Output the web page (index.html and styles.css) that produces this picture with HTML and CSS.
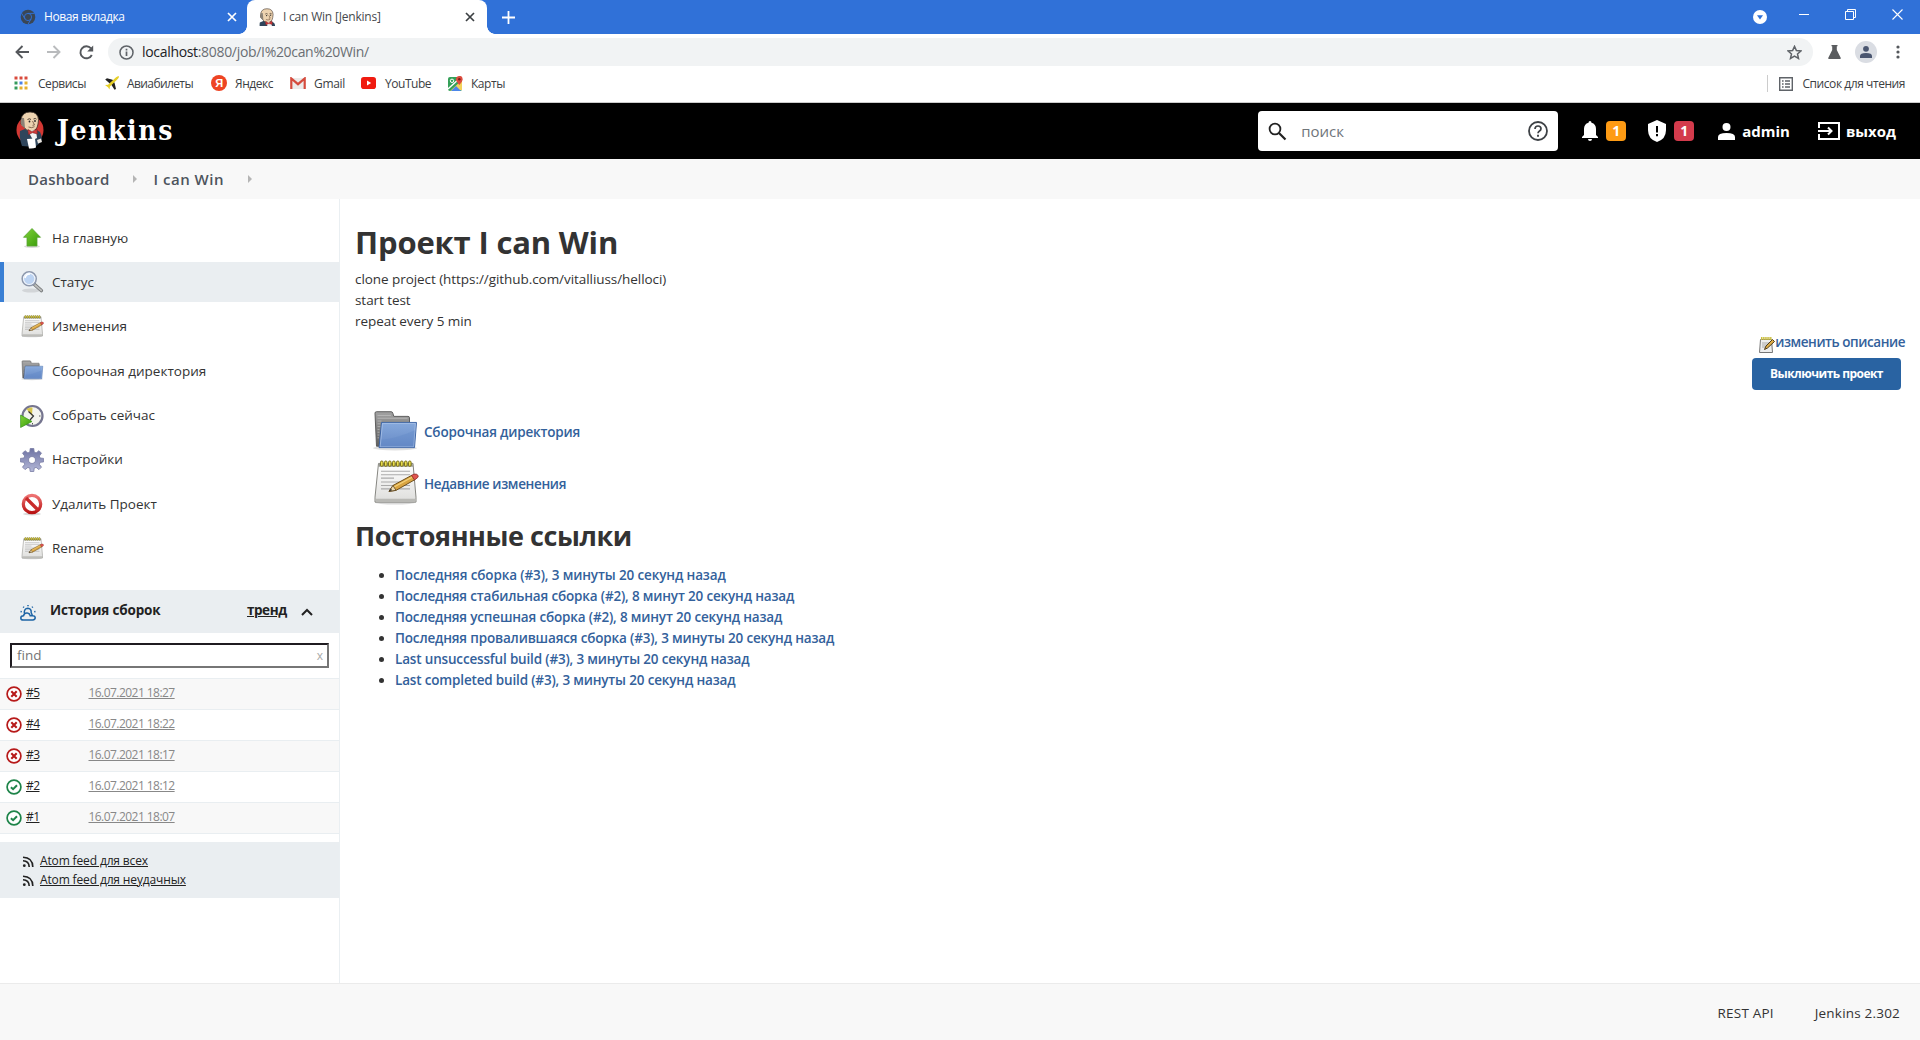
FILE: index.html
```
<!DOCTYPE html>
<html lang="ru">
<head>
<meta charset="utf-8">
<title>I can Win [Jenkins]</title>
<link rel="stylesheet" href="styles.css">
</head>
<body>
<svg class="defs" width="0" height="0" aria-hidden="true">
  <defs>
    <linearGradient id="g-green" x1="0" y1="0" x2="1" y2="1"><stop offset="0" stop-color="#82d33a"/><stop offset="1" stop-color="#369a08"/></linearGradient>
    <linearGradient id="g-blue" x1="0" y1="0" x2="0" y2="1"><stop offset="0" stop-color="#86a9dc"/><stop offset="1" stop-color="#6689c5"/></linearGradient>
    <linearGradient id="g-gray" x1="0" y1="0" x2="0" y2="1"><stop offset="0" stop-color="#a2a2a2"/><stop offset="1" stop-color="#5f5f5f"/></linearGradient>
    <linearGradient id="g-paper" x1="0" y1="0" x2="0" y2="1"><stop offset="0" stop-color="#ffffff"/><stop offset="1" stop-color="#dededc"/></linearGradient>
    <linearGradient id="g-gear" x1="0" y1="0" x2="0" y2="1"><stop offset="0" stop-color="#6d72a3"/><stop offset="1" stop-color="#b4b8d8"/></linearGradient>
    <linearGradient id="g-red" x1="0" y1="0" x2="0" y2="1"><stop offset="0" stop-color="#ee7373"/><stop offset="1" stop-color="#b91313"/></linearGradient>
  </defs>
  <symbol id="folder" viewBox="0 0 48 51.500" preserveAspectRatio="none">
    <ellipse cx="24" cy="43" rx="22" ry="2.500" fill="#000" opacity=".12"/>
    <path d="M4 5.500q0-1.500 1.500-1.500H20q1.500 0 1.800 1.500l1 3.500H37q1.500 0 1.500 1.500V41H5.500Z" fill="url(#g-gray)" stroke="#5a5a5a"/>
    <path d="M6.500 8H20M6.500 11h30M6.500 14h4M6.500 17h3M6.500 20h3M6.500 23h2M6.500 26h2M6.500 29h2M6.500 32h1.500" stroke="#c4c4c4" stroke-width=".7"/>
    <path d="M10.500 15.500H45.500L43.500 42.500H8Z" fill="url(#g-blue)" stroke="#3c64a4" stroke-linejoin="round"/>
    <path d="M11.500 16.500H44.400L42.600 41.500H9.200Z" fill="none" stroke="#b5cbec" stroke-width=".8" opacity=".8"/>
    <path d="M10.500 34Q25 33 44 24l-1.500 17.500H9.500Z" fill="#5f86c6" opacity=".35"/>
  </symbol>
  <symbol id="notepad" viewBox="0 2 48 49" preserveAspectRatio="none">
    <ellipse cx="24" cy="45.500" rx="20" ry="2" fill="#000" opacity=".15"/>
    <path d="M7.500 5.500H42L45 40v5H4v-5Z" fill="url(#g-paper)" stroke="#85857f" stroke-linejoin="round"/>
    <path d="M5 41.500h39.500v3H5Z" fill="#b9b9b5"/>
    <path d="M8 5.500H41.500L42 9H7.500Z" fill="#96968e"/>
    <g fill="#e9dc4d" stroke="#79701a" stroke-width="1"><rect x="9.500" y="3" width="2.600" height="5.500" rx="1.300"/><rect x="13.500" y="3" width="2.600" height="5.500" rx="1.300"/><rect x="17.500" y="3" width="2.600" height="5.500" rx="1.300"/><rect x="21.500" y="3" width="2.600" height="5.500" rx="1.300"/><rect x="25.500" y="3" width="2.600" height="5.500" rx="1.300"/><rect x="29.500" y="3" width="2.600" height="5.500" rx="1.300"/><rect x="33.500" y="3" width="2.600" height="5.500" rx="1.300"/><rect x="37.500" y="3" width="2.600" height="5.500" rx="1.300"/></g>
    <path d="M10 13.500H39M10 17H39M10 20.500H23M10 24.500H39M10 28H39M10 31.500H39" stroke="#aaa" stroke-width="1.100"/>
    <path d="M18 34l4-6L41 17.500l3 4.500-19 11Z" fill="#d9a441" stroke="#6b4c17" stroke-linejoin="round"/>
    <path d="M23 29.500L41 19.500" stroke="#f4d27c" stroke-width="1.200"/>
    <path d="M18 34l4-6 3 5Z" fill="#ecd9b0" stroke="#5b4420" stroke-width=".8"/>
    <path d="M18 34l2-2.700 1 1.700Z" fill="#222"/>
    <path d="M40.500 17.700l2.500-1.300q3.500-.8 4.300 2 .3 1.500-3.800 4Z" fill="#e0554f" stroke="#8e2b27" stroke-width=".8"/>
  </symbol>
  <symbol id="butler" viewBox="0 0 28 38">
    <path d="M6 35Q3 27 4 20l5-2h10l5 3q3 6 1 10l-6 5Z" fill="#2f455b"/>
    <path d="M5 9Q6 1 14 1q8 0 8.500 8l-.5 4q-1 7-7 7.500-5-.5-8-5.500-3-1-2-6Z" fill="#edd3b0" stroke="#3b3028" stroke-width=".8"/>
    <path d="M6 7q-2 5 0 8l3 2-.5-6-.5-4Z" fill="#8b8377"/>
    <path d="M11.500 8.500q2-1.500 3.500 0M17.500 8q2-1.200 3 .2" fill="none" stroke="#4b3c30"/>
    <circle cx="13.500" cy="10.500" r=".9" fill="#252525"/><circle cx="19" cy="10" r=".9" fill="#252525"/>
    <path d="M16.500 10l2 4-2 .3M12.500 16q3 1.500 6-.3" fill="none" stroke="#6b4e3a" stroke-width=".8"/>
    <path d="M12 20l8-1 1 8-4 2Z" fill="#f3f3f3"/>
    <path d="M12 18.500l4 2.200 5-2.700.4 5-5-1.300-4 2Z" fill="#cf3a3a" stroke="#7a1c1c" stroke-width=".5"/>
    <path d="M11 28l8-.6 1 9q-3 1.500-7 1Z" fill="#fff"/>
    <path d="M21 29l4-1.500 1 3.500-4 1.500Z" fill="#e9e4de"/>
  </symbol>
  <symbol id="failed" viewBox="0 0 16 16"><circle cx="8" cy="8" r="6.900" fill="#fff" stroke="#b71a1a" stroke-width="1.700"/><path d="M5.300 5.300l5.400 5.400M10.700 5.300l-5.400 5.400" stroke="#b71a1a" stroke-width="2.100"/></symbol>
  <symbol id="passed" viewBox="0 0 16 16"><circle cx="8" cy="8" r="6.900" fill="#fff" stroke="#1e8449" stroke-width="1.700"/><path d="M4.900 8.200l2.200 2 3.900-3.900" fill="none" stroke="#1e8449" stroke-width="2"/></symbol>
  <symbol id="rss" viewBox="0 0 12 12"><circle cx="2.300" cy="9.700" r="1.400" fill="#222"/><path d="M1 4.800q6 .2 6.200 6.200M1 1.300q9.600.3 9.800 9.700" fill="none" stroke="#222" stroke-width="1.600"/></symbol>
</svg>

<div class="tabs">
  <div class="tab">
    <svg width="16" height="16" viewBox="0 0 16 16"><circle cx="8" cy="8" r="7.300" fill="#3a4654"/><circle cx="8" cy="8" r="3.600" fill="none" stroke="#3071d8" stroke-width=".9"/><path d="M8 4.400h6.500M4.900 9.800L1.600 4.200M11.100 9.800L8 15.300" stroke="#3071d8" stroke-width=".9"/></svg>
    <span class="tab-title new">Новая вкладка</span>
    <svg width="10" height="10" viewBox="0 0 10 10"><path d="M1 1l8 8M9 1L1 9" stroke="#fff" stroke-width="1.700"/></svg>
  </div>
  <div class="tab active">
    <svg width="16" height="18" viewBox="3 0 22 25"><use href="#butler" width="28" height="38"/></svg>
    <span class="tab-title">I can Win [Jenkins]</span>
    <svg width="10" height="10" viewBox="0 0 10 10"><path d="M1 1l8 8M9 1L1 9" stroke="#3c4043" stroke-width="1.700"/></svg>
  </div>
  <svg class="plus" width="13" height="13" viewBox="0 0 13 13"><path d="M6.500 0v13M0 6.500h13" stroke="#fff" stroke-width="1.800"/></svg>
  <div class="window-buttons">
    <svg width="14" height="14" viewBox="0 0 14 14"><circle cx="7" cy="7" r="7" fill="#fff"/><path d="M4 5.200h6L7 9.500Z" fill="#3071d8"/></svg>
    <svg class="wb first" width="10" height="10" viewBox="0 0 10 10"><path d="M0 5.500h10" stroke="#fff"/></svg>
    <svg class="wb" width="11" height="11" viewBox="0 0 11 11" fill="none" stroke="#fff"><path d="M.5 2.500h8v8h-8ZM2.500 2V.5h8v8H9"/></svg>
    <svg class="wb" width="11" height="11" viewBox="0 0 11 11"><path d="M.5.500l10 10M10.500.500l-10 10" stroke="#fff" stroke-width="1.100"/></svg>
  </div>
</div>

<div class="toolbar">
  <svg width="14" height="14" viewBox="0 0 14 14" fill="none" stroke="#55585c" stroke-width="1.900"><path d="M14 7H1.500M7.500 1L1.500 7l6 6"/></svg>
  <svg width="14" height="14" viewBox="0 0 14 14" fill="none" stroke="#b9bbbd" stroke-width="1.900"><path d="M0 7h12.500M6.500 1l6 6-6 6"/></svg>
  <svg width="15" height="15" viewBox="0 0 15 15"><path d="M12.800 10A6 6 0 1 1 12 3.400" fill="none" stroke="#55585c" stroke-width="1.900"/><path d="M14.200.500v6H8.200Z" fill="#55585c"/></svg>
  <div class="omnibox">
    <svg width="15" height="15" viewBox="0 0 15 15"><circle cx="7.500" cy="7.500" r="6.500" fill="none" stroke="#5f6368" stroke-width="1.500"/><path d="M7.500 6.500v4.500M7.500 3.800v1.600" stroke="#5f6368" stroke-width="1.700"/></svg>
    <span class="url"><b>localhost</b>:8080/job/I%20can%20Win/</span>
    <svg width="15" height="15" viewBox="0 0 15 15"><path d="M7.500 1.400l1.900 4.200 4.500.4-3.400 3 1 4.400-4-2.400-4 2.400 1-4.400-3.400-3 4.500-.4Z" fill="none" stroke="#5f6368" stroke-width="1.500"/></svg>
  </div>
  <svg class="flask" width="13" height="14" viewBox="0 0 13 14"><path d="M3.500 0h6v1.300H8.800V5l4 8q.2 1-.8 1H1q-1 0-.8-1l4-8V1.300h-.7Z" fill="#5a5c5f"/></svg>
  <svg class="avatar" width="22" height="22" viewBox="0 0 22 22"><circle cx="11" cy="11" r="11" fill="#dadde3"/><circle cx="11" cy="7.800" r="2.900" fill="#4a5670"/><path d="M5 17v-2q0-3 6-3t6 3v2Z" fill="#4a5670"/></svg>
  <svg class="dots" width="4" height="14" viewBox="0 0 4 14" fill="#55585c"><circle cx="2" cy="2" r="1.600"/><circle cx="2" cy="7" r="1.600"/><circle cx="2" cy="12" r="1.600"/></svg>
</div>

<div class="bookmarks">
  <a class="bm b1"><svg width="14" height="14" viewBox="0 0 14 14"><path d="M.5.500h3v3h-3ZM5.500.500h3v3h-3ZM10.500.500h3v3h-3Z" fill="#d94b3d"/><path d="M.5 5.500h3v3h-3Z" fill="#359a5c"/><path d="M5.500 5.500h3v3h-3Z" fill="#4a80e8"/><path d="M10.500 5.500h3v3h-3ZM5.500 10.500h3v3h-3ZM10.500 10.500h3v3h-3Z" fill="#e5b02f"/><path d="M.5 10.500h3v3h-3Z" fill="#359a5c"/></svg><span>Сервисы</span></a>
  <a class="bm b2"><svg width="14" height="14" viewBox="0 0 14 14"><path d="M.2 3.500L2 2.300l5.500 1.500 2 3L11 13l-1.500.8L6.500 9Z" fill="#222"/><path d="M0 9l3-.3L10.800 1.500Q12.500 0 14 .2q.2 1.300-1.500 3L5 10.500l-.5 3L3 11.200Z" fill="#e6cf28"/></svg><span>Авиабилеты</span></a>
  <a class="bm b3"><span class="ya">Я</span><span>Яндекс</span></a>
  <a class="bm b4"><svg width="16" height="12" viewBox="0 0 16 12"><path d="M1 1h14v11H1Z" fill="#ecebea"/><path d="M1.300 12V1.500L8 7.200l6.700-5.700V12" fill="none" stroke="#d54b3d" stroke-width="2.200"/></svg><span>Gmail</span></a>
  <a class="bm b5"><svg width="15" height="12" viewBox="0 0 15 12"><rect width="15" height="12" rx="2.800" fill="#f01b10"/><path d="M6 3.500v5L10.200 6Z" fill="#fff"/></svg><span>YouTube</span></a>
  <a class="bm b6"><svg width="15" height="15" viewBox="0 0 15 15"><rect y="1" width="14" height="14" rx="2" fill="#34a058"/><path d="M2 15L13 5l1 1v8Z" fill="#f3d25a"/><path d="M3 15l5-5 5 5Z" fill="#4b87ea"/><path d="M0 13L12 2" stroke="#fff" stroke-width="1.300"/><circle cx="4" cy="4.800" r="1.700" fill="none" stroke="#fff"/><path d="M11.300 9Q8 5.500 8 3.300q0-3 3.300-3.300t3.300 3.300Q14.600 5.500 11.300 9Z" fill="#dd4b3e"/><circle cx="11.300" cy="3.300" r="1.200" fill="#7d1c14"/></svg><span>Карты</span></a>
  <a class="bm reading"><svg width="14" height="14" viewBox="0 0 14 14"><path d="M.7.700h12.600v12.600H.7Z" fill="none" stroke="#5f6368" stroke-width="1.400"/><path d="M3 4h1.600M3 7h1.600M3 10h1.600M6 4h5M6 7h5M6 10h5" stroke="#5f6368" stroke-width="1.500"/></svg><span>Список для чтения</span></a>
</div>

<header class="header">
  <a class="logo">
    <svg width="28" height="42" viewBox="0 -1 28 42"><ellipse cx="14" cy="19" rx="13.500" ry="14" fill="#d33833"/><use href="#butler" width="28" height="38"/></svg>
    <span>Jenkins</span>
  </a>
  <div class="search">
    <svg width="19" height="19" viewBox="0 0 19 19"><circle cx="7" cy="7" r="5.400" fill="none" stroke="#222" stroke-width="1.800"/><path d="M11 11l6.500 6.500" stroke="#222" stroke-width="2.200"/></svg>
    <span>поиск</span>
    <svg width="20" height="20" viewBox="0 0 20 20"><circle cx="10" cy="10" r="9" fill="none" stroke="#3d4145" stroke-width="1.800"/><path d="M7 8q0-3 3-3t3 2.700q0 1.300-1.500 2.300T10 12.300" fill="none" stroke="#3d4145" stroke-width="1.700"/><path d="M10 13.700v2" stroke="#3d4145" stroke-width="1.900"/></svg>
  </div>
  <svg width="16" height="20" viewBox="0 0 16 20"><path d="M8 0q1.500 0 1.500 1.800Q14 3 14 8v6l2 2v1H0v-1l2-2V8q0-5 4.500-6.200Q6.500 0 8 0ZM6 18h4q0 2-2 2t-2-2Z" fill="#fff"/></svg>
  <span class="badge warn">1</span>
  <svg class="shield" width="18" height="22" viewBox="0 0 18 22"><path d="M9 0l9 4v6q0 9-9 12Q0 19 0 10V4Z" fill="#fff"/><path d="M9 6v6.500M9 14v2.200" stroke="#000" stroke-width="2"/></svg>
  <span class="badge danger">1</span>
  <svg class="user" width="17" height="17" viewBox="0 0 17 17"><circle cx="8.500" cy="4" r="4" fill="#fff"/><path d="M0 17v-3q0-4 8.500-4t8.500 4v3Z" fill="#fff"/></svg>
  <span class="name">admin</span>
  <svg class="exit" width="22" height="18" viewBox="0 0 22 18"><path d="M1 6V1h20v16H1v-5M0 9h13M10 5.500L13.500 9 10 12.500" fill="none" stroke="#fff" stroke-width="2"/></svg>
  <span class="logout">выход</span>
</header>

<nav class="crumbs"><a class="dash">Dashboard</a><i></i><a class="proj">I can Win</a><i></i></nav>

<div class="page">
  <aside class="side">
    <div class="tasks">
      <a class="task"><svg width="24" height="24" viewBox="0 0 24 24"><ellipse cx="12" cy="20.500" rx="8" ry="1.500" opacity=".15"/><path d="M12 2.500l8.500 8.800h-3.500V20h-10v-8.700h-3.500Z" fill="url(#g-green)" stroke="#58a332" stroke-width=".8" stroke-linejoin="round"/></svg><span>На главную</span></a>
      <a class="task current"><svg width="24" height="24" viewBox="0 0 24 24"><ellipse cx="11" cy="20.500" rx="9" ry="2" opacity=".1"/><path d="M14.500 14.500l6.800 6" stroke="#76787a" stroke-width="3.600" stroke-linecap="round"/><path d="M15 15l6.300 5.500" stroke="#bcbebd" stroke-width="1.700" stroke-linecap="round"/><circle cx="9.200" cy="8.800" r="7" fill="#bcd3f2" stroke="#8e98ac" stroke-width="1.600"/><circle cx="9.200" cy="8.800" r="5.700" fill="none" stroke="#f1f5fb" stroke-width="1.100"/><path d="M5 8q1-4 5-4" fill="none" stroke="#fff" stroke-width="1.600"/></svg><span>Статус</span></a>
      <a class="task"><svg width="24" height="24"><use href="#notepad"/></svg><span>Изменения</span></a>
      <a class="task"><svg width="24" height="24"><use href="#folder"/></svg><span>Сборочная директория</span></a>
      <a class="task"><svg width="24" height="24" viewBox="0 0 24 24"><circle cx="12.500" cy="12" r="10" fill="#f3f4ee" stroke="#75758f" stroke-width="2.200"/><path d="M12 12L6.500 5q3-2 6-1.500Z" fill="#d6c54d"/><path d="M8.500 7.500l5 4.500-3.500 4" fill="none" stroke="#333" stroke-width="1.200"/><path d="M19 12h1.500M12.500 19v1.500" stroke="#555"/><path d="M.6 11v12.500L12 17.500Z" fill="url(#g-green)" stroke="#369319" stroke-width=".7"/></svg><span>Собрать сейчас</span></a>
      <a class="task"><svg width="24" height="24" viewBox="0 0 24 24"><path d="M10.200.500h3.600l.4 3.600 1.900.8 2.900-2.200L21.500 5.200 19.300 8l.8 2 3.500.4v3.500l-3.500.4-.8 2 2.200 2.800-2.500 2.500-2.900-2.200-1.900.8-.4 3.300h-3.600l-.4-3.300-1.900-.8L5 21.600 2.500 19.100l2.200-2.800-.8-2-3.500-.4v-3.500l3.500-.4.8-2L2.500 5.200 5 2.700l2.900 2.200 1.900-.8ZM12 8.500a3.500 3.500 0 1 0 .01 0Z" fill="url(#g-gear)" stroke="#777ba3" stroke-width=".8" fill-rule="evenodd"/></svg><span>Настройки</span></a>
      <a class="task"><svg width="24" height="24" viewBox="0 0 24 24"><ellipse cx="12" cy="22" rx="9" ry="1.500" opacity=".15"/><circle cx="12" cy="12" r="8.700" fill="#fff" stroke="url(#g-red)" stroke-width="3.200"/><path d="M6 6l12 12" stroke="#c92b2b" stroke-width="3.300"/></svg><span>Удалить Проект</span></a>
      <a class="task"><svg width="24" height="24"><use href="#notepad"/></svg><span>Rename</span></a>
    </div>

    <div class="history-head">
      <svg class="weather" width="16" height="16" viewBox="0 0 16 16" fill="none" stroke="#1d64a5" stroke-width="1.500"><path d="M3.400 15q-2.600 0-2.600-2.100t2.700-2.200Q4.500 7.500 7.500 8q2.200.3 2.700 2.700h2.300q2.700.1 2.700 2.100T12.700 15ZM4.300 8.300Q4 3.500 7.800 3.300q3.700.2 3.400 4.400l1.300 3"/><path d="M8 0v1.200M3.200 1.700l.8.900M12.800 1.700l-.8.900M.5 6.500l1.300.3M15.500 6.500l-1.300.3"/></svg>
      <span class="history-title">История сборок</span>
      <a class="trend">тренд</a>
      <svg class="chevron" width="12" height="8" viewBox="0 0 12 8"><path d="M1 7l5-5 5 5" fill="none" stroke="#222" stroke-width="2"/></svg>
    </div>
    <div class="find"><span>find</span><span class="clear">x</span></div>
    <div class="builds">
      <div class="build"><svg width="16" height="16"><use href="#failed"/></svg><a class="num">#5</a><a class="date">16.07.2021 18:27</a></div>
      <div class="build"><svg width="16" height="16"><use href="#failed"/></svg><a class="num">#4</a><a class="date">16.07.2021 18:22</a></div>
      <div class="build"><svg width="16" height="16"><use href="#failed"/></svg><a class="num">#3</a><a class="date">16.07.2021 18:17</a></div>
      <div class="build"><svg width="16" height="16"><use href="#passed"/></svg><a class="num">#2</a><a class="date">16.07.2021 18:12</a></div>
      <div class="build"><svg width="16" height="16"><use href="#passed"/></svg><a class="num">#1</a><a class="date">16.07.2021 18:07</a></div>
    </div>
    <div class="feeds">
      <a class="feed"><svg width="12" height="12"><use href="#rss"/></svg><span>Atom feed для всех</span></a>
      <a class="feed"><svg width="12" height="12"><use href="#rss"/></svg><span>Atom feed для неудачных</span></a>
    </div>
  </aside>

  <main class="main">
    <h1>Проект I can Win</h1>
    <div class="desc">clone project (https://github.com/vitalliuss/helloci)<br>start test<br>repeat every 5 min</div>
    <div class="actions">
      <a class="edit"><svg width="16" height="16" viewBox="0 0 16 16"><path d="M1.500 2.500h11l1 13h-13Z" fill="#eee" stroke="#777"/><path d="M2 1.500h11" stroke="#c9bd3e" stroke-width="3" stroke-dasharray="1.500 .6"/><path d="M3 6h7M3 8h5M3 10h4" stroke="#aaa"/><path d="M5.500 12.500l1.500-3.500 6.500-6.500 2 2L8.500 11Z" fill="#dfae49" stroke="#4d3b1c"/></svg><span>изменить описание</span></a>
      <button class="disable">Выключить проект</button>
    </div>
    <div class="links">
      <a class="big"><svg width="48" height="48"><use href="#folder"/></svg><span>Сборочная директория</span></a>
      <a class="big changes"><svg width="48" height="48"><use href="#notepad"/></svg><span>Недавние изменения</span></a>
    </div>
    <h2>Постоянные ссылки</h2>
    <ul class="perma">
      <li><a>Последняя сборка (#3), 3 минуты 20 секунд назад</a></li>
      <li><a>Последняя стабильная сборка (#2), 8 минут 20 секунд назад</a></li>
      <li><a>Последняя успешная сборка (#2), 8 минут 20 секунд назад</a></li>
      <li><a>Последняя провалившаяся сборка (#3), 3 минуты 20 секунд назад</a></li>
      <li><a>Last unsuccessful build (#3), 3 минуты 20 секунд назад</a></li>
      <li><a>Last completed build (#3), 3 минуты 20 секунд назад</a></li>
    </ul>
  </main>
</div>

<footer class="footer"><a>REST API</a><a>Jenkins 2.302</a></footer>
</body>
</html>
```
FILE: styles.css
```
* { box-sizing: border-box; }
body {
  margin: 0; width: 1920px; height: 1040px; overflow: hidden;
  display: flex; flex-direction: column;
  font: 13.5px/21px "Open Sans", "Noto Sans", sans-serif;
  color: #333; background: #fff; white-space: nowrap;
}
svg { flex: none; display: block; }
.defs { position: absolute; }

/* browser chrome */
.tabs { height: 34px; flex: none; background: #3071d8; display: flex; align-items: center; }
.tab {
  width: 247px; height: 34px; flex: none; display: flex; align-items: center;
  padding: 0 10px 0 20px; font-size: 12px; color: #fff;
}
.tab-title { flex: 1; margin-left: 8px; letter-spacing: -.2px; padding-bottom: 1px; }
.tab-title.new { letter-spacing: -.4px; }
.tab.active {
  width: 240px; background: #fff; color: #45494d; border-radius: 8px 8px 0 0;
  padding: 0 12px 0 12px; position: relative;
}
.tab.active::before, .tab.active::after {
  content: ""; position: absolute; bottom: 0; width: 8px; height: 8px;
}
.tab.active::before { left: -8px; background: radial-gradient(circle at 0 0, transparent 7.5px, #fff 8px); }
.tab.active::after { right: -8px; background: radial-gradient(circle at 100% 0, transparent 7.5px, #fff 8px); }
.plus { margin-left: 15px; }
.window-buttons { margin-left: auto; display: flex; align-items: center; padding-right: 17px; }
.wb { margin: 0 0 6px 36px; }
.wb.first { margin-left: 32px; }

.toolbar { height: 36px; flex: none; display: flex; align-items: center; padding: 0 20px 0 15px; }
.toolbar > svg + svg { margin-left: 18px; }
.omnibox {
  margin-left: 14px; flex: 1; height: 28px; border-radius: 14px; background: #f1f3f4;
  display: flex; align-items: center; padding: 0 11px; font-size: 14px; color: #6a6e73;
}
.url { flex: 1; margin-left: 8px; letter-spacing: -.32px; padding-bottom: 1px; }
.url b { font-weight: 400; color: #202124; }
.flask { margin-left: 15px; }
.toolbar > .avatar { margin-left: 14px; }
.toolbar > .dots { margin-left: 19px; }

.bookmarks {
  height: 33px; flex: none; display: flex; align-items: center; padding: 0 15px 5px 14px;
  border-bottom: 1px solid #ccc; font-size: 12px; color: #3c4043; letter-spacing: -.46px;
}
.bm { display: flex; align-items: center; gap: 9px; padding-bottom: 1px; }
.b1 { width: 90px; gap: 10px; }
.b2 { width: 107px; letter-spacing: -.6px; gap: 8px; }
.b2 svg { margin-left: 1px; }
.b3 { width: 79px; gap: 8px; }
.b4 { width: 71px; gap: 8px; letter-spacing: -.3px; }
.b5 { width: 87px; }
.b6 { gap: 8px; }
.ya {
  width: 16px; height: 16px; border-radius: 50%; background: #ee4423; color: #fff;
  font: 700 11px/16px "Liberation Sans", sans-serif; text-align: center;
}
.reading { margin-left: auto; border-left: 1px solid #ccc; padding: 0 0 0 11px; height: 17px; gap: 10px; letter-spacing: -.44px; }

/* application header */
.header { height: 56px; flex: none; background: #000; color: #fff; display: flex; align-items: center; padding-left: 16px; }
.logo { display: flex; align-items: center; font: 700 28px/40px "DejaVu Serif Condensed", "DejaVu Serif", serif; letter-spacing: 1.600px; }
.logo span { margin: 0 0 1px 13px; }
.search {
  margin-left: auto; width: 300px; height: 40px; margin-right: 24px; background: #fff; border-radius: 4px;
  display: flex; align-items: center; padding: 0 10px; font-size: 15px; color: #70757a;
}
.search span { flex: 1; margin-left: 14px; }
.badge {
  width: 20px; height: 20px; border-radius: 4px; margin-left: 8px;
  font: 700 14px/20px "Open Sans", sans-serif; text-align: center;
}
.warn { background: #fe9b14; }
.danger { background: #d33b4c; }
.shield { margin-left: 22px; }
.user { margin-left: 24px; }
.name, .logout { font-weight: 700; font-size: 15px; margin-left: 7px; }
.exit { margin-left: 28px; }
.logout { margin-right: 24px; margin-left: 6px; }

.crumbs { height: 40px; flex: none; background: #f8f8f8; display: flex; align-items: center; padding-left: 28px; font-size: 15px; font-weight: 600; color: #4d545d; }
.crumbs i { width: 0; border: 4.500px solid transparent; border-left-color: #b5b5b5; border-right: 0; margin: 0 17px 0 23px; }
.crumbs .proj { letter-spacing: .5px; margin-right: 1px; }
.crumbs .dash { letter-spacing: .22px; }

/* columns */
.page { flex: 1; display: flex; min-height: 0; }
.side { width: 340px; flex: none; border-right: 1px solid #eaeff2; }
.tasks { padding-top: 19px; display: flex; flex-direction: column; gap: 4.4px; font-weight: 500; }
.task { height: 40px; display: flex; align-items: center; gap: 8px; padding-left: 20px; color: #333; }
.current { background: #eaeef1; border-left: 4px solid #3a7fd4; padding-left: 16px; }
.history-head {
  margin-top: 21px; height: 43px; background: #eaeef1; display: flex; align-items: center; padding-left: 20px;
  font-weight: 700; letter-spacing: -.15px; color: #222;
}
.weather { margin-top: 3px; }
.chevron { margin-top: 2px; }
.history-title { margin: 0 86px 1px 14px; width: 111px; }
.trend { margin: 0 14px 1px 0; text-decoration: underline; letter-spacing: -.45px; }
.find {
  height: 25px; margin: 10px 10px; border: 2px solid; border-color: #1f1b20 #767676 #767676 #1f1b20;
  display: flex; align-items: center; justify-content: space-between; padding: 1px 4px 0 5px; color: #757575;
}
.clear { font-size: 12px; color: #aaa; }
.build {
  height: 31px; border-top: 1px solid #e9eef1; display: flex; align-items: center; padding-left: 6px;
  font-size: 12px; letter-spacing: -.55px;
}
.build:nth-child(odd) { background: #f8f8f8; }
.build:last-child { height: 32px; border-bottom: 1px solid #e9eef1; }
.num { width: 59px; margin: 0 0 3px 4px; text-decoration: underline; font-weight: 500; color: #222; }
.date { margin: 0 0 3px 3.500px; text-decoration: underline; color: #888; }
.feeds { margin-top: 8px; height: 56px; background: #eaeef1; padding: 9px 0 0 22px; font-size: 12px; font-weight: 500; letter-spacing: -.14px; }
.feed { height: 19px; display: flex; align-items: center; gap: 6px; color: #222; text-decoration: underline; }
.feed svg { margin-top: 3px; }

.main { flex: 1; padding: 21px 15px 0; display: flex; flex-direction: column; }
h1 { margin: 0; font-size: 31px; line-height: 44px; letter-spacing: -.17px; }
.desc { margin-top: 5px; letter-spacing: -.06px; }
.actions { display: flex; flex-direction: column; align-items: flex-end; }
.edit { display: flex; align-items: center; color: #33619b; font-weight: 550; letter-spacing: -.44px; }
.edit svg { margin-top: 4px; }
.disable {
  margin: 5px 4px 0 0; width: 149px; height: 32px; border: 0; border-radius: 4px; background: #2963a2; color: #fff;
  font: 700 12px/32px "Open Sans", sans-serif; letter-spacing: -.54px; padding: 0;
}
.links { margin: 18px 0 0 16px; display: flex; flex-direction: column; gap: 4px; }
.big { height: 48px; display: flex; align-items: center; gap: 5px; color: #33619b; font-weight: 550; letter-spacing: -.19px; }
.changes { letter-spacing: -.34px; }
h2 { margin: 10px 0 0; font-size: 27px; line-height: 36px; letter-spacing: -.45px; }
.perma { margin: 11px 0 0; padding-left: 40px; letter-spacing: -.17px; }
.perma a { color: #33619b; font-weight: 550; }
.perma li:first-child { letter-spacing: -.13px; }

.footer {
  height: 57px; flex: none; border-top: 1px solid #ebebeb; background: #f8f8f8; display: flex; align-items: center;
  justify-content: flex-end; gap: 41px; padding: 2px 20px 0 0; font-weight: 500; letter-spacing: .2px;
}
```
